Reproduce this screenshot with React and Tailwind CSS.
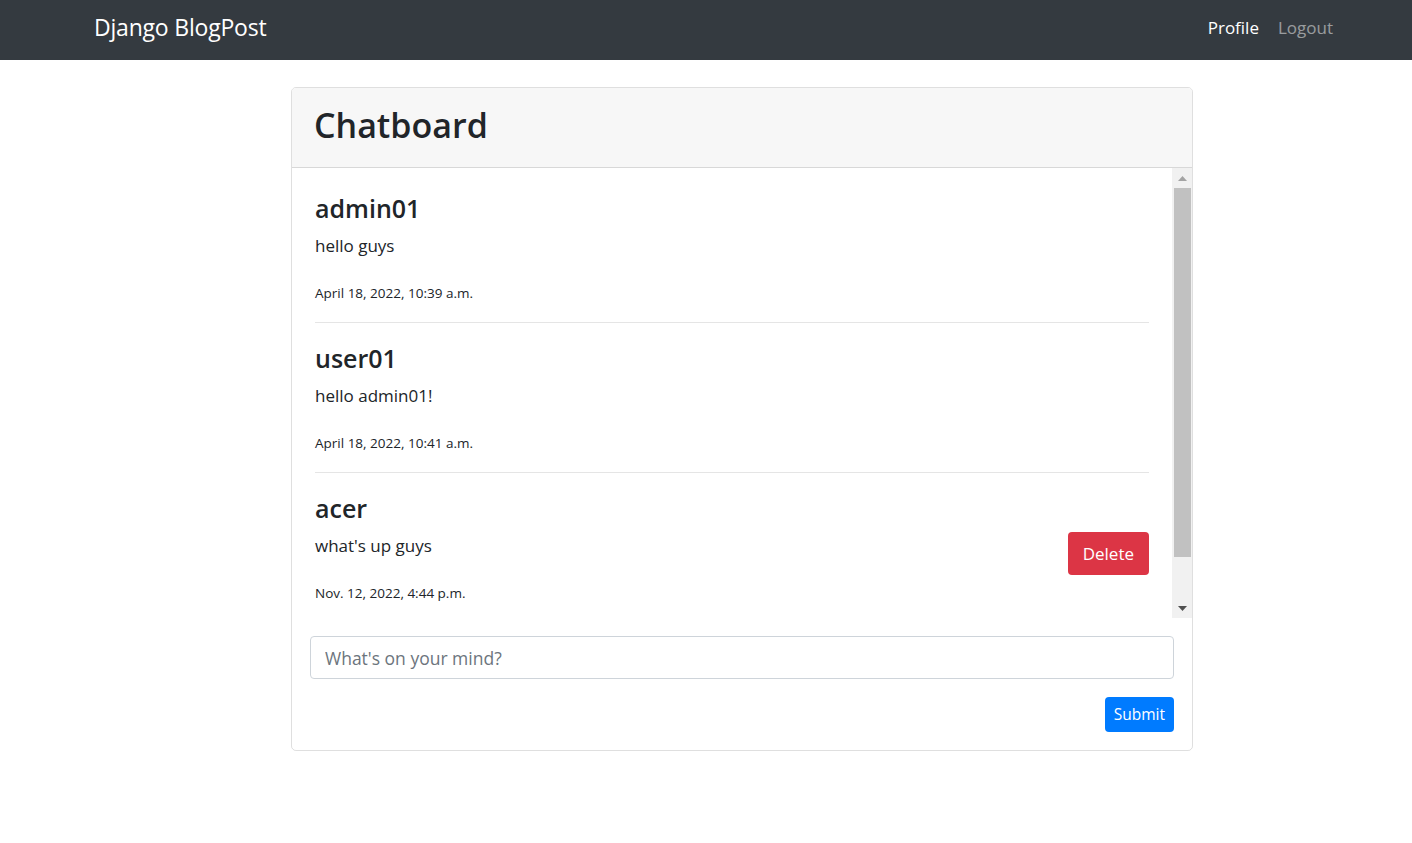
import React from "react";

const posts = [
  { id: 1, user: "admin01", text: "hello guys", date: "April 18, 2022, 10:39 a.m." },
  { id: 2, user: "user01", text: "hello admin01!", date: "April 18, 2022, 10:41 a.m." },
  { id: 3, user: "acer", text: "what's up guys", date: "Nov. 12, 2022, 4:44 p.m.", mine: true },
];

const Navbar = () => (
  <nav className="h-[60px] bg-[#343a40] flex items-center justify-between pl-[94px] pr-[79px] pb-[5px]">
    <a href="#" className="text-white text-[23px] leading-none tracking-[-0.2px]">
      Django BlogPost
    </a>
    <div className="flex items-center gap-[19px] text-[17px] leading-none">
      <a href="#" className="text-white">Profile</a>
      <a href="#" className="text-white/50">Logout</a>
    </div>
  </nav>
);

// fake windows-style scrollbar, scrolled to top
const Scrollbar = () => (
  <div className="w-[20px] shrink-0 bg-[#f1f1f1] flex flex-col items-center">
    <div className="h-[20px] w-full flex items-center justify-center">
      <svg width="9" height="5" viewBox="0 0 9 5">
        <path d="M4.5 0L9 5H0z" fill="#a3a3a3" />
      </svg>
    </div>
    <div className="w-[17px] h-[369px] bg-[#c1c1c1]" />
    <div className="flex-1" />
    <div className="h-[20px] w-full flex items-center justify-center">
      <svg width="9" height="5" viewBox="0 0 9 5">
        <path d="M0 0H9L4.5 5z" fill="#505050" />
      </svg>
    </div>
  </div>
);

const Post = ({ post, last }) => (
  <div className={last ? "" : "border-b border-black/10 pb-[18px] mb-[19px]"}>
    <div className="flex items-center justify-between">
      <div>
        <h4 className="text-[25px] leading-[32px] font-semibold mb-[8px]">{post.user}</h4>
        <p className="text-[17px] leading-[27px] mb-[23px]">{post.text}</p>
        <small className="block text-[13.5px] leading-[22px]">{post.date}</small>
      </div>
      {post.mine && (
        <button className="mt-[11px] h-[43px] px-[15px] rounded-[4px] bg-[#dc3545] text-white text-[17px]">
          Delete
        </button>
      )}
    </div>
  </div>
);

export default function App() {
  return (
    <div className="min-h-[843px] bg-white text-[#212529] font-['Open_Sans','Noto_Sans',sans-serif]">
      <Navbar />
      <div className="pt-[27px] pl-[291px]">
        <div className="w-[902px] border border-black/[0.125] rounded-[5px] overflow-hidden">
          <div className="bg-[#f7f7f7] border-b border-black/[0.125] px-[22px] pt-[15px] pb-[20px]">
            <h2 className="text-[34px] leading-[44px] font-semibold">Chatboard</h2>
          </div>
          <div className="flex h-[450px]">
            <div className="flex-1 overflow-hidden px-[23px] pt-[24px]">
              {posts.map((p, i) => (
                <Post key={p.id} post={p} last={i === posts.length - 1} />
              ))}
            </div>
            <Scrollbar />
          </div>
          <form className="px-[18px] pt-[18px] pb-[18px]" onSubmit={(e) => e.preventDefault()}>
            <input
              type="text"
              placeholder="What's on your mind?"
              className="w-full h-[43px] px-[14px] border border-[#ced4da] rounded-[4px] text-[17.5px] placeholder:text-[#6c757d] outline-none"
            />
            <div className="flex justify-end mt-[18px]">
              <button className="h-[35px] px-[9px] rounded-[4px] bg-[#007bff] text-white text-[15.5px]">
                Submit
              </button>
            </div>
          </form>
        </div>
      </div>
    </div>
  );
}
